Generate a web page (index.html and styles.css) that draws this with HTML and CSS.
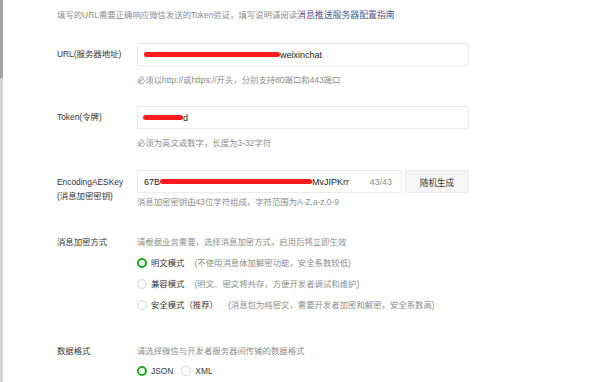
FILE: index.html
```html
<!DOCTYPE html>
<html lang="zh-CN">
<head>
<meta charset="UTF-8">
<meta name="viewport" content="width=device-width, initial-scale=1.0">
<title>服务器配置</title>
<link rel="stylesheet" href="styles.css">
</head>
<body>

<!-- scrollbar on the left edge -->
<div class="scroll-track"><div class="scroll-thumb"></div></div>

<div class="page">
    <p class="intro">填写的URL需要正确响应微信发送的Token验证，填写说明请阅读<a href="#" class="link">消息推送服务器配置指南</a></p>

    <div class="form-row row-url">
        <label class="row-label">URL(服务器地址)</label>
        <div class="row-body">
            <div class="field"><span class="mask mask-url"></span><span class="value">weixinchat</span></div>
            <p class="hint">必须以http://或https://开头，分别支持80端口和443端口</p>
        </div>
    </div>

    <div class="form-row row-token">
        <label class="row-label">Token(令牌)</label>
        <div class="row-body">
            <div class="field"><span class="mask mask-token"></span><span class="value">d</span></div>
            <p class="hint">必须为英文或数字，长度为3-32字符</p>
        </div>
    </div>

    <div class="form-row row-aes">
        <label class="row-label two-line">EncodingAESKey<br>(消息加密密钥)</label>
        <div class="row-body">
            <div class="field-group">
                <div class="field field-aes">
                    <span class="value">67B</span><span class="mask mask-aes"></span><span class="value">MvJIPKrr</span>
                    <span class="counter">43/43</span>
                </div>
                <button type="button" class="btn">随机生成</button>
            </div>
            <p class="hint hint-tight">消息加密密钥由43位字符组成，字符范围为A-Z,a-z,0-9</p>
        </div>
    </div>

    <div class="form-row row-mode">
        <label class="row-label plain">消息加密方式</label>
        <div class="row-body">
            <p class="desc">请根据业务需要，选择消息加密方式，启用后将立即生效</p>
            <ul class="radio-list">
                <li class="radio-item"><span class="radio checked"></span><span class="radio-text">明文模式</span><span class="radio-note">(不使用消息体加解密功能，安全系数较低)</span></li>
                <li class="radio-item"><span class="radio"></span><span class="radio-text">兼容模式</span><span class="radio-note">(明文、密文将共存，方便开发者调试和维护)</span></li>
                <li class="radio-item"><span class="radio"></span><span class="radio-text">安全模式（推荐）</span><span class="radio-note">(消息包为纯密文，需要开发者加密和解密，安全系数高)</span></li>
            </ul>
        </div>
    </div>

    <div class="form-row row-format">
        <label class="row-label plain">数据格式</label>
        <div class="row-body">
            <p class="desc">请选择微信与开发者服务器间传输的数据格式</p>
            <div class="radio-inline">
                <span class="radio checked"></span><span class="radio-text">JSON</span>
                <span class="radio"></span><span class="radio-text">XML</span>
            </div>
        </div>
    </div>
</div>

</body>
</html>
```

FILE: styles.css
```css
/* General */
* {
    margin: 0;
    padding: 0;
    box-sizing: border-box;
}

body {
    background: #fff;
    font-family: "Liberation Sans", "Noto Sans CJK SC", sans-serif;
    font-size: 8.4px;
    color: #353535;
    overflow: hidden;
}

/* Scrollbar strip */
.scroll-track {
    position: fixed;
    left: 0;
    top: 0;
    width: 3px;
    height: 100%;
    background: #d2d2d2;
}

.scroll-thumb {
    width: 3px;
    height: 78px;
    background: #a3a3a3;
}

.page {
    padding: 8px 0 0 57px;
}

/* Intro */
.intro {
    line-height: 14px;
    color: #8d8d8d;
}

.link {
    color: #4b5a8c;
    font-size: 8.9px;
    text-decoration: none;
}

/* Rows */
.form-row {
    display: grid;
    grid-template-columns: 80px 332px;
}

.row-url { margin-top: 21px; }
.row-token { margin-top: 19px; }
.row-aes { margin-top: 20px; }
.row-mode { margin-top: 26px; }
.row-format { margin-top: 32px; }

.row-label {
    line-height: 23px;
    color: #353535;
}

.row-label.two-line {
    line-height: 14px;
    padding-top: 5px;
}

.row-label.plain {
    line-height: 14px;
}

/* Inputs */
.field {
    display: flex;
    align-items: center;
    height: 23px;
    padding: 0 6px;
    border: 1px solid #ebebee;
    border-radius: 2px;
    background: #fff;
    font-size: 9px;
    color: #222;
}

.mask {
    height: 5px;
    background: #ff1b1b;
    border-radius: 3px;
}

.mask-url { width: 136px; }
.mask-token { width: 40px; margin-left: -1px; }
.mask-aes { width: 152px; }

.field-group {
    display: flex;
    gap: 3px;
}

.field-aes {
    flex: 1;
}

.counter {
    margin-left: auto;
    margin-right: 3px;
    color: #8d8d8d;
}

.btn {
    width: 64px;
    height: 23px;
    border: 1px solid #ececec;
    border-radius: 2px;
    background: #f6f6f6;
    font-family: inherit;
    font-size: 8.6px;
    color: #353535;
}

/* Hints */
.hint {
    margin-top: 7px;
    line-height: 14px;
    color: #8d8d8d;
}

.hint.hint-tight {
    margin-top: 2px;
}

.desc {
    line-height: 14px;
    color: #8d8d8d;
}

/* Radios */
.radio-list {
    list-style: none;
    margin-top: 7px;
    display: flex;
    flex-direction: column;
    gap: 7px;
}

.radio-item {
    display: flex;
    align-items: center;
    line-height: 14px;
}

.radio {
    display: inline-block;
    width: 10px;
    height: 10px;
    border: 1px solid #d9d9d9;
    border-radius: 50%;
    margin-right: 4px;
    flex-shrink: 0;
}

.radio.checked {
    border: 2.6px solid #1aad19;
}

.radio-text {
    color: #353535;
}

.radio-note {
    margin-left: 10px;
    color: #8d8d8d;
}

.radio-inline {
    display: flex;
    align-items: center;
    margin-top: 6px;
    line-height: 14px;
}

.radio-inline .radio-text {
    margin-right: 8px;
}
```
